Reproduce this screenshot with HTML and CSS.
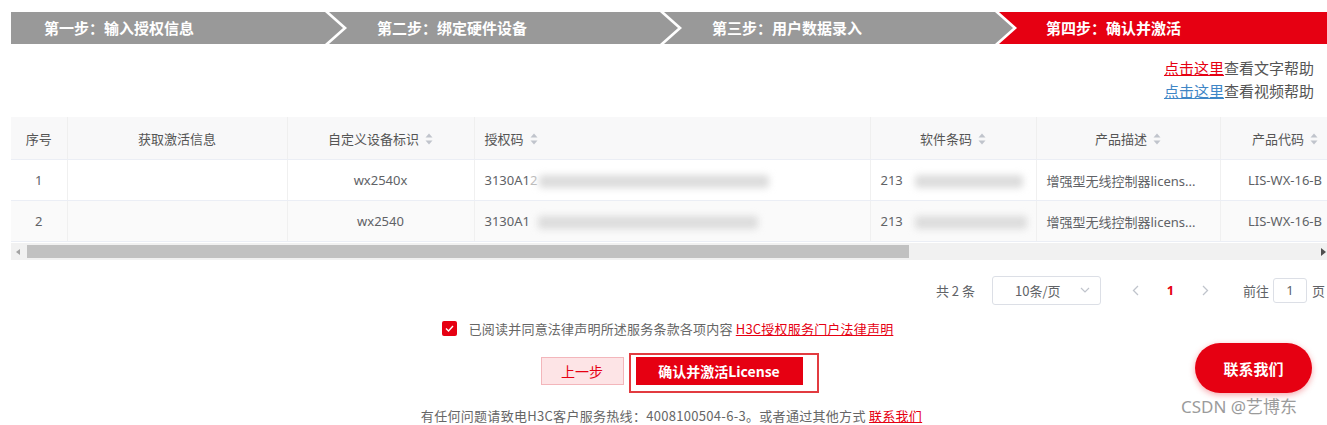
FILE: index.html
```html
<!DOCTYPE html>
<html lang="zh-CN">
<head>
<meta charset="utf-8">
<title>确认并激活</title>
<link rel="stylesheet" href="styles.css">
</head>
<body>
<div class="page">
  <div class="steps">
    <div class="step step-first">第一步：输入授权信息</div>
    <div class="step step-mid">第二步：绑定硬件设备</div>
    <div class="step step-mid">第三步：用户数据录入</div>
    <div class="step step-last active">第四步：确认并激活</div>
  </div>

  <div class="help">
    <div><a class="link-red">点击这里</a>查看文字帮助</div>
    <div><a class="link-blue">点击这里</a>查看视频帮助</div>
  </div>

  <div class="table-wrap">
    <table class="grid">
      <colgroup>
        <col class="c1"><col class="c2"><col class="c3"><col class="c4"><col class="c5"><col class="c6"><col class="c7">
      </colgroup>
      <thead>
        <tr>
          <th class="center">序号</th>
          <th class="center">获取激活信息</th>
          <th class="center">自定义设备标识<span class="sort"><svg width="8" height="12" viewBox="0 0 8 12"><path d="M4 0.5L7.5 4.5H0.5Z" fill="#c0c4cc"/><path d="M4 11.5L7.5 7.5H0.5Z" fill="#c0c4cc"/></svg></span></th>
          <th class="left">授权码<span class="sort"><svg width="8" height="12" viewBox="0 0 8 12"><path d="M4 0.5L7.5 4.5H0.5Z" fill="#c0c4cc"/><path d="M4 11.5L7.5 7.5H0.5Z" fill="#c0c4cc"/></svg></span></th>
          <th class="center">软件条码<span class="sort"><svg width="8" height="12" viewBox="0 0 8 12"><path d="M4 0.5L7.5 4.5H0.5Z" fill="#c0c4cc"/><path d="M4 11.5L7.5 7.5H0.5Z" fill="#c0c4cc"/></svg></span></th>
          <th class="center">产品描述<span class="sort"><svg width="8" height="12" viewBox="0 0 8 12"><path d="M4 0.5L7.5 4.5H0.5Z" fill="#c0c4cc"/><path d="M4 11.5L7.5 7.5H0.5Z" fill="#c0c4cc"/></svg></span></th>
          <th class="center">产品代码<span class="sort"><svg width="8" height="12" viewBox="0 0 8 12"><path d="M4 0.5L7.5 4.5H0.5Z" fill="#c0c4cc"/><path d="M4 11.5L7.5 7.5H0.5Z" fill="#c0c4cc"/></svg></span></th>
        </tr>
      </thead>
      <tbody>
        <tr>
          <td class="center">1</td>
          <td></td>
          <td class="center">wx2540x</td>
          <td class="left">3130A1<span class="cut">2</span><span class="blur blur-a"></span></td>
          <td class="left">213<span class="blur blur-c"></span></td>
          <td class="left">增强型无线控制器licens...</td>
          <td class="center">LIS-WX-16-B</td>
        </tr>
        <tr class="striped">
          <td class="center">2</td>
          <td></td>
          <td class="center">wx2540</td>
          <td class="left">3130A1<span class="blur blur-b"></span></td>
          <td class="left">213<span class="blur blur-d"></span></td>
          <td class="left">增强型无线控制器licens...</td>
          <td class="center">LIS-WX-16-B</td>
        </tr>
      </tbody>
    </table>
    <div class="hscroll">
      <span class="arrow-left"></span>
      <div class="thumb"></div>
      <span class="arrow-right"></span>
    </div>
  </div>

  <div class="pager">
    <span class="total">共 2 条</span>
    <div class="size-select">
      <span>10条/页</span>
      <svg width="10" height="6" viewBox="0 0 10 6"><path d="M1 1L5 5L9 1" fill="none" stroke="#c0c4cc" stroke-width="1.2"/></svg>
    </div>
    <span class="pbtn"><svg width="7" height="11" viewBox="0 0 7 11"><path d="M6 1L1.5 5.5L6 10" fill="none" stroke="#c0c4cc" stroke-width="1.3"/></svg></span>
    <span class="pbtn current">1</span>
    <span class="pbtn"><svg width="7" height="11" viewBox="0 0 7 11"><path d="M1 1L5.5 5.5L1 10" fill="none" stroke="#c0c4cc" stroke-width="1.3"/></svg></span>
    <span class="goto">前往</span>
    <span class="goto-input">1</span>
    <span class="goto-page">页</span>
  </div>

  <div class="agree">
    <span class="checkbox"><svg width="9" height="7" viewBox="0 0 9 7"><path d="M1 3.5L3.5 6L8 1" fill="none" stroke="#fff" stroke-width="1.4"/></svg></span>
    <span class="agree-text">已阅读并同意法律声明所述服务条款各项内容 <a class="link-red">H3C授权服务门户法律声明</a></span>
  </div>

  <div class="actions">
    <button class="btn btn-prev">上一步</button>
    <div class="mark">
      <button class="btn btn-confirm">确认并激活License</button>
    </div>
  </div>

  <div class="footer">有任何问题请致电H3C客户服务热线：4008100504-6-3。或者通过其他方式 <a class="link-red">联系我们</a></div>

  <div class="contact">联系我们</div>
  <div class="watermark">CSDN @艺博东</div>
</div>
</body>
</html>
```

FILE: styles.css
```css
html, body {
  margin: 0;
  padding: 0;
  background: #fff;
}
body {
  font-family: "Noto Sans", "Noto Sans CJK SC", sans-serif;
  color: #606266;
  overflow: hidden;
  width: 1327px;
  height: 425px;
}
.page {
  position: relative;
  width: 1327px;
  height: 425px;
  box-sizing: border-box;
  padding-top: 12px;
  overflow: hidden;
}

/* steps */
.steps {
  display: flex;
  margin: 0 0 0 11px;
  height: 32px;
}
.step {
  height: 32px;
  line-height: 32px;
  background: #999999;
  color: #fff;
  font-family: "Noto Sans CJK SC", sans-serif;
  font-size: 15px;
  font-weight: bold;
  box-sizing: border-box;
  white-space: nowrap;
}
.step-first {
  width: 332px;
  flex: none;
  padding-left: 33px;
  clip-path: polygon(0 0, calc(100% - 18px) 0, 100% 50%, calc(100% - 18px) 100%, 0 100%);
}
.step-mid {
  width: 349px;
  flex: none;
  margin-left: -14px;
  padding-left: 48px;
  clip-path: polygon(0 0, calc(100% - 18px) 0, 100% 50%, calc(100% - 18px) 100%, 0 100%, 18px 50%);
}
.step-last {
  flex: 1;
  margin-left: -14px;
  padding-left: 47px;
  clip-path: polygon(0 0, 100% 0, 100% 100%, 0 100%, 18px 50%);
}
.step.active {
  background: #e60012;
}

/* help */
.help {
  margin-top: 12px;
  text-align: right;
  padding-right: 13px;
  font-family: "Noto Sans CJK SC", sans-serif;
  font-size: 15px;
  line-height: 23px;
  color: #555;
}
.link-red {
  color: #e60012;
  text-decoration: underline;
}
.link-blue {
  color: #3f86c6;
  text-decoration: underline;
}

/* table */
.table-wrap {
  margin: 15px 0 0 11px;
  width: 1316px;
  overflow: hidden;
}
.grid {
  border-collapse: collapse;
  table-layout: fixed;
  width: 1339px;
  font-size: 13px;
  font-family: "Noto Sans", "Noto Sans CJK SC", sans-serif;
}
.c1 { width: 56px; }
.c2 { width: 220px; }
.c3 { width: 187px; }
.c4 { width: 396px; }
.c5 { width: 166px; }
.c6 { width: 184px; }
.c7 { width: 130px; }
.grid th {
  height: 42px;
  background: #f8f8f9;
  color: #555;
  font-weight: normal;
  font-family: "Noto Sans CJK SC", sans-serif;
  border-right: 1px solid #efefef;
  border-bottom: 1px solid #ebeef5;
  padding: 0;
  white-space: nowrap;
}
.grid td {
  height: 40px;
  border-right: 1px solid #f0f0f0;
  border-bottom: 1px solid #ebeef5;
  padding: 0;
  white-space: nowrap;
  overflow: hidden;
  color: #606266;
}
.grid tr.striped td {
  background: #fafafa;
}
.center { text-align: center; }
.left { text-align: left; padding-left: 10px !important; }
.sort {
  display: inline-block;
  margin-left: 6px;
  vertical-align: -1px;
}
.sort svg { display: block; }
.cut { color: #bbb; }
.blur {
  display: inline-block;
  height: 13px;
  vertical-align: middle;
  background: #dcdcdc;
  filter: blur(3.5px);
  border-radius: 3px;
}
.blur-a { width: 230px; margin-left: 2px; }
.blur-b { width: 220px; margin-left: 8px; }
.blur-c { width: 108px; margin-left: 12px; }
.blur-d { width: 112px; margin-left: 12px; }

.hscroll {
  display: flex;
  align-items: center;
  height: 17px;
  background: #f1f1f1;
  margin-top: 1px;
}
.arrow-left {
  width: 0;
  height: 0;
  border-top: 3px solid transparent;
  border-bottom: 3px solid transparent;
  border-right: 4px solid #a3a3a3;
  margin: 0 7px 0 5px;
}
.thumb {
  width: 882px;
  height: 13px;
  background: #c1c1c1;
}
.arrow-right {
  width: 0;
  height: 0;
  border-top: 4px solid transparent;
  border-bottom: 4px solid transparent;
  border-left: 5px solid #505050;
  margin-left: auto;
  margin-right: 1px;
}

/* pager */
.pager {
  display: flex;
  justify-content: flex-end;
  align-items: center;
  margin-top: 15px;
  height: 30px;
  padding-right: 2px;
  font-size: 13px;
  font-family: "Noto Sans CJK SC", sans-serif;
  color: #606266;
}
.total { margin-right: 17px; }
.size-select {
  width: 109px;
  height: 29px;
  box-sizing: border-box;
  border: 1px solid #dcdfe6;
  border-radius: 3px;
  display: flex;
  align-items: center;
  padding: 0 10px 0 22px;
  justify-content: space-between;
  margin-right: 17px;
}
.pbtn {
  width: 35px;
  height: 28px;
  display: flex;
  align-items: center;
  justify-content: center;
  font-family: "Noto Sans", sans-serif;
}
.pbtn.current {
  color: #e60012;
  font-weight: bold;
}
.goto { margin-left: 20px; margin-right: 4px; }
.goto-input {
  width: 34px;
  height: 25px;
  box-sizing: border-box;
  border: 1px solid #dcdfe6;
  border-radius: 3px;
  display: flex;
  align-items: center;
  justify-content: center;
  font-family: "Noto Sans", sans-serif;
}
.goto-page { margin-left: 5px; }

/* agree */
.agree {
  display: flex;
  justify-content: center;
  align-items: center;
  margin-top: 13px;
  height: 20px;
  padding-left: 8px;
  font-size: 13px;
  font-family: "Noto Sans CJK SC", sans-serif;
  color: #666;
}
.agree-text { letter-spacing: 0.2px; }
.checkbox {
  width: 15px;
  height: 15px;
  border-radius: 2px;
  background: #e60012;
  display: flex;
  align-items: center;
  justify-content: center;
  margin-right: 12px;
}
.checkbox svg { display: block; }

/* actions */
.actions {
  display: flex;
  justify-content: center;
  align-items: flex-start;
  margin-top: 15px;
  padding-left: 32px;
}
.btn {
  height: 28px;
  border: none;
  font-family: "Noto Sans CJK SC", sans-serif;
  font-size: 14px;
  padding: 0;
  cursor: pointer;
}
.btn-prev {
  width: 83px;
  margin-top: 4px;
  margin-right: 5px;
  background: #fde4e6;
  border: 1px solid #f3b6bb;
  color: #e60012;
  box-sizing: border-box;
}
.mark {
  border: 2px solid #e23b40;
  padding: 2px 14px 6px 5px;
}
.btn-confirm {
  display: block;
  width: 167px;
  background: #e60012;
  color: #fff;
  font-weight: bold;
}

/* footer */
.footer {
  margin-top: 14px;
  text-align: center;
  padding-left: 16px;
  font-size: 13px;
  line-height: 18px;
  letter-spacing: 0.3px;
  font-family: "Noto Sans CJK SC", sans-serif;
  color: #666;
}

/* overlays */
.contact {
  position: absolute;
  left: 1195px;
  top: 343px;
  width: 117px;
  height: 50px;
  border-radius: 25px;
  background: #e60012;
  color: #fff;
  font-family: "Noto Sans CJK SC", sans-serif;
  font-size: 15px;
  font-weight: bold;
  display: flex;
  align-items: center;
  justify-content: center;
  box-shadow: 0 2px 6px rgba(230, 0, 18, 0.35);
}
.watermark {
  position: absolute;
  left: 1181px;
  top: 396px;
  height: 22px;
  line-height: 22px;
  font-family: "Noto Sans", "Noto Sans CJK SC", sans-serif;
  font-size: 17px;
  color: #9b9b9b;
  white-space: nowrap;
}
```
